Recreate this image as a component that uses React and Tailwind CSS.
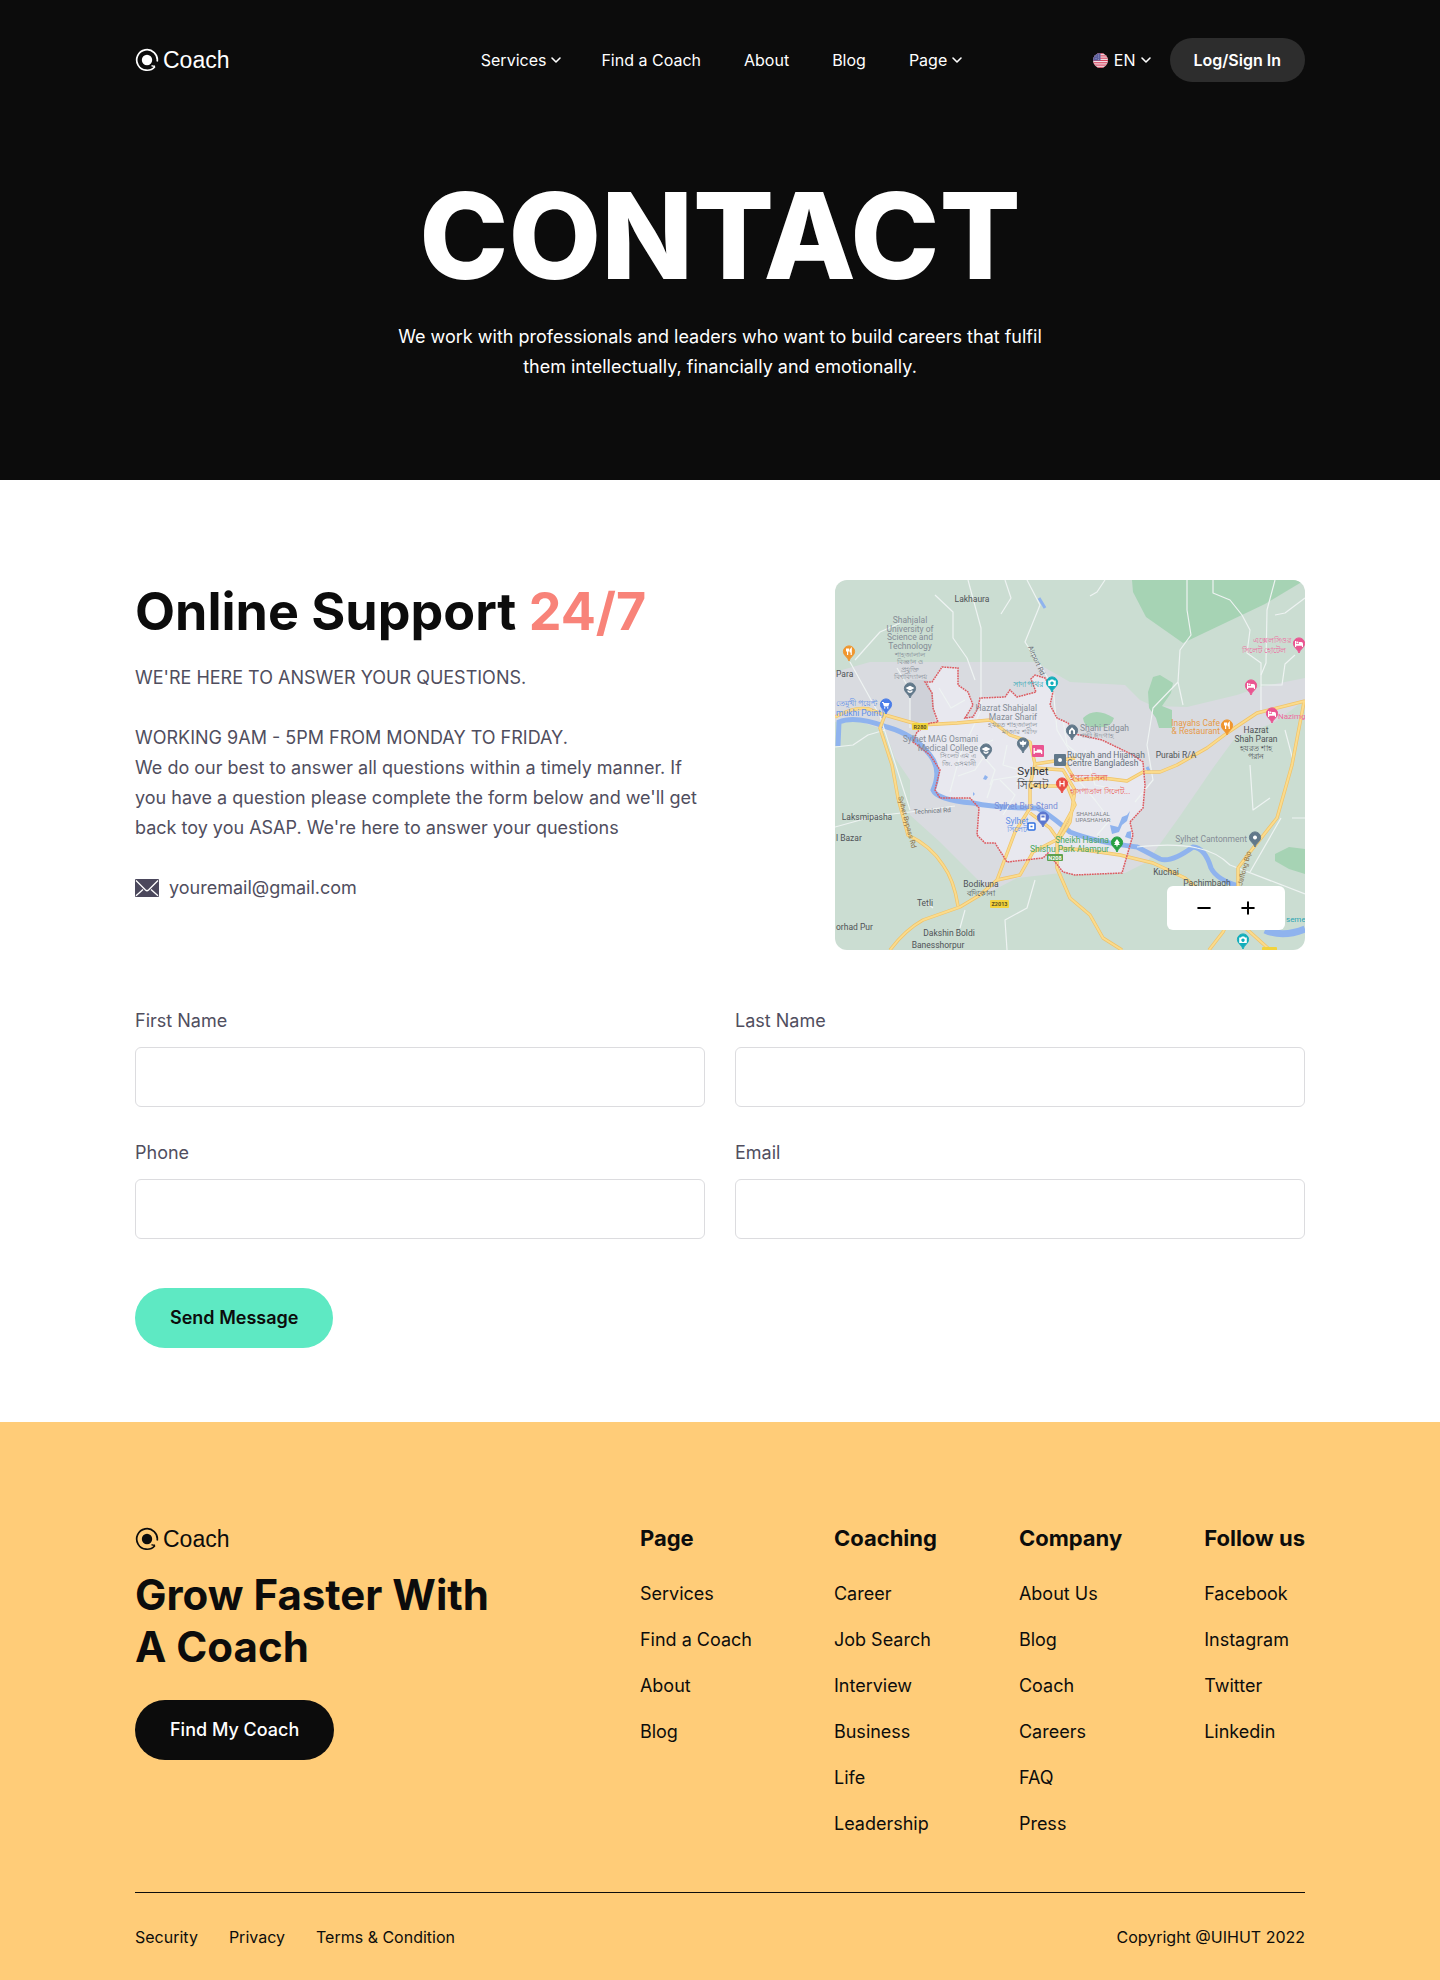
import { ChevronDown, Minus, Plus } from "lucide-react";

function Logo({ className = "" }) {
  return (
    <a href="#home" className={`flex h-7 items-center gap-1 ${className}`}>
      <svg viewBox="0 0 24 24" className="size-6" fill="none" aria-hidden="true">
        <path d="M22.200 13.500A10.300 10.300 0 1 0 19.800 18.700" stroke="currentColor" strokeWidth="1.700" />
        <circle cx="12" cy="12" r="5.200" fill="currentColor" />
        <path d="M16.500 17.600q1.800.8 3.600.6" stroke="currentColor" strokeWidth="1.500" />
      </svg>
      <span className="font-['Liberation_Sans',Arial,sans-serif] text-[23px] leading-7">Coach</span>
    </a>
  );
}

function Flag() {
  return (
    <svg viewBox="0 0 15 15" className="size-[15px]" aria-hidden="true">
      <clipPath id="flag-clip">
        <circle cx="7.5" cy="7.5" r="7.5" />
      </clipPath>
      <g clipPath="url(#flag-clip)">
        <rect width="15" height="15" fill="#f3e9ee" />
        {[0, 1, 2, 3, 4, 5, 6].map((i) => (
          <rect key={i} y={i * 2.3} width="15" height="1.15" fill="#d8435c" />
        ))}
        <rect width="7.5" height="7.6" fill="#5b5e9c" />
        <g fill="#c9cbe6">
          <circle cx="3" cy="3" r=".45" />
          <circle cx="5.5" cy="2" r=".45" />
          <circle cx="5.5" cy="4" r=".45" />
          <circle cx="3" cy="5.5" r=".45" />
          <circle cx="5.5" cy="6.2" r=".45" />
        </g>
      </g>
    </svg>
  );
}

const navItems = [
  { label: "Services", menu: true },
  { label: "Find a Coach" },
  { label: "About" },
  { label: "Blog" },
  { label: "Page", menu: true },
];

function Header() {
  return (
    <header className="bg-[#0c0c0c] pb-[98px] text-white">
      <div className="mx-auto grid max-w-[1170px] grid-cols-[1fr_auto_1fr] items-center pt-[38px]">
        <Logo />
        <nav className="flex items-center gap-[43px] text-base">
          {navItems.map(({ label, menu }) =>
            menu ? (
              <button key={label} type="button" className="-mr-1.5 flex items-center gap-0.5">
                {label}
                <ChevronDown className="size-4" strokeWidth={2.4} />
              </button>
            ) : (
              <a key={label} href="#home">
                {label}
              </a>
            )
          )}
        </nav>
        <div className="flex items-center justify-end gap-4">
          <button type="button" className="flex items-center text-base">
            <Flag />
            <span className="ml-1.5 mr-0.5">EN</span>
            <ChevronDown className="size-4" strokeWidth={2.4} />
          </button>
          <button type="button" className="h-11 rounded-full bg-[#2d2d2d] px-6 text-base font-semibold">
            Log/Sign In
          </button>
        </div>
      </div>
      <div className="mx-auto mt-[81px] max-w-[680px] text-center">
        <h1 className="text-[120px] font-extrabold leading-[146px]">CONTACT</h1>
        <p className="mt-[13px] text-lg leading-[30px]">
          We work with professionals and leaders who want to build careers that fulfil them intellectually,
          financially and emotionally.
        </p>
      </div>
    </header>
  );
}

/* ---- Map ---- */

const cityEdge =
  "M130 138L138 125L133 112L123 105L123 88L107 87L97 102L90 102L97 113L98 128L103 142L95 143L82 152L78 162L95 175L105 190L100 210L105 218L135 218L144 228L142 255L150 263L160 263L172 282L208 278L213 273L228 292L240 295L287 293L298 255L295 242L308 228L310 205L308 182L298 175L267 160L240 154L233 143L222 138L215 125L218 112L210 98L200 95L196 99L201 112L182 117L175 110L170 117L145 118L143 128L138 137Z";

const yellowRoads = [
  "M0 137Q20 126 34 129L50 135L85 145L122 143L155 140L175 155L195 162L200 184L195 205V228L180 252L162 300L145 315L125 327L88 340Q70 350 55 370",
  "M50 135L45 148L57 185L63 218L73 255Q96 266 108 285Q119 300 123 326",
  "M162 300L185 295L198 272L225 258L235 242L240 210L228 190L200 188",
  "M195 233L215 248L222 258V288L235 318L255 335L268 358L287 370",
  "M222 268L250 270L285 275L318 283L350 298L380 322L415 352L435 370",
  "M228 180L240 200L268 198L292 201L308 192L325 192L342 185L372 168L392 153L422 133L470 121",
  "M469 122L457 185L442 238L415 272L403 288V320L388 352L374 370",
  "M196 206H228M200 184L240 178M222 258L240 225L232 205",
];

const whiteRoads = [
  "M133 0L146 48V130L140 143L125 175L115 212",
  "M100 15L118 32V58L132 78L140 100",
  "M192 0L205 25L190 62L205 85L218 107L222 150L240 180",
  "M15 82L45 136L75 230M75 148V110L62 88",
  "M0 247L40 236L75 232L120 226",
  "M378 0V13L395 20L407 35L415 50L412 73L426 83V130",
  "M352 0L352 30L356 55L345 70L343 102L348 125M343 102L318 128L312 165L318 200L300 222",
  "M440 0L432 30L431 83L426 95M470 18L450 33L440 35M426 105H447L450 84L460 75",
  "M450 150L458 180M415 185L418 230L435 218M457 238H470",
  "M235 190L260 220L275 240L262 255M302 267Q340 263 362 268Q382 272 395 285L470 314",
  "M446 238L415 292M90 322L98 328M130 330L125 348M200 300L192 328L170 340L172 370",
  "M104 108L116 128L130 120M108 165L124 162L140 168L158 160M147 175L160 190L155 205M165 200L180 215L168 235",
  "M150 175L140 190L123 196M240 180L262 184L285 180M250 170L260 205L285 210M20 80L36 62L45 52L65 43",
  "M0 167L18 165L33 155L50 150M170 0L176 18L166 34M270 0L262 12L255 16",
  "M152 218L158 200L190 195M172 165L168 185L185 190L182 205M228 140L232 165L250 180",
];

const pins = [
  { x: 14, y: 81, color: "#f0962e", kind: "fork" },
  { x: 51, y: 134, color: "#4a7de8", kind: "cart" },
  { x: 75, y: 118, color: "#61788a", kind: "cap" },
  { x: 217, y: 112, color: "#12aebb", kind: "camera" },
  { x: 151, y: 179, color: "#61788a", kind: "cap" },
  { x: 188, y: 173, color: "#61788a", kind: "flower" },
  { x: 237, y: 160, color: "#61788a", kind: "arch" },
  { x: 464, y: 73, color: "#ea5591", kind: "bed" },
  { x: 416, y: 115, color: "#ea5591", kind: "bed" },
  { x: 437, y: 143, color: "#ea5591", kind: "bed" },
  { x: 392, y: 155, color: "#f0962e", kind: "fork" },
  { x: 227, y: 213, color: "#ea4b43", kind: "hospital" },
  { x: 208, y: 247, color: "#5b76cf", kind: "bus" },
  { x: 282, y: 272, color: "#28a044", kind: "tree" },
  { x: 420, y: 267, color: "#61788a", kind: "dot" },
  { x: 408, y: 369, color: "#12aebb", kind: "camera" },
];

/* Glyphs are centred on the head of the pin, 9.5 units above its tip. */
const pinGlyphs = {
  fork: { line: "M-2.400-12.500v2.500h2v-2.500M-1.400-12.500v6.500M2.200-6v-6.500q-1.600 1.500-1 3.500h1" },
  cart: { fill: "M-4-12h1.600l.5 1h5.400l-1.200 3.600h-4.300L-3.200-11H-4ZM-2-6.800h1.300v1.300H-2ZM1-6.800h1.300v1.300H1Z" },
  cap: { fill: "M-4.500-9.900L0-12.300L4.500-9.900L0-7.500ZM-2.400-7.900L0-6.600L2.400-7.900V-6L0-5L-2.400-6Z" },
  camera: {
    fill: "M-3.800-11.500h1.800l.8-1h2.400l.8 1h1.800v5.500h-7.600ZM0-10.500a1.700 1.700 0 1 0 .01 0Z",
  },
  flower: { fill: "M0-13l1.300 2L3.500-11.500L2.800-8.500L.6-8V-6H-.6V-8L-2.800-8.500L-3.500-11.500L-1.300-11Z" },
  arch: { fill: "M-3-6v-3.500L0-12.800L3-9.500V-6H1.200V-8.500a1.200 1.200 0 0 0-2.400 0V-6Z" },
  bed: { fill: "M-4-12h1.200v3h2.600v-2h2.500q1.700 0 1.700 1.800V-6H2.900v-1.300h-5.700V-6H-4ZM-1.600-11.600a.9.9 0 1 0 .01 0Z" },
  hospital: { line: "M-2-12.200v5.600M2-12.200v5.600M-2-9.400h4" },
  bus: { fill: "M-2.600-12.500h5.200v6h-5.200ZM-1.600-11.500v2h3.200v-2Z" },
  tree: { fill: "M0-13L2.800-9H1.600L3-7H.6v1.500H-.6V-7H-3L-1.600-9H-2.800Z" },
  dot: { fill: "M0-11.500a2 2 0 1 0 .01 0Z" },
};

function Pin({ x, y, color, kind }) {
  const { fill, line } = pinGlyphs[kind];
  return (
    <g transform={`translate(${x} ${y})`}>
      <path
        d="M0 0C-1-4-5.600-5.300-5.600-9.500A5.600 5.600 0 0 1 5.600-9.500C5.600-5.300 1-4 0 0Z"
        fill={color}
        stroke={color}
        strokeWidth="1"
      />
      {fill ? <path d={fill} fill="#fff" fillRule="evenodd" /> : <path d={line} fill="none" stroke="#fff" strokeWidth="1.200" />}
    </g>
  );
}

const labels = [
  { x: 137, y: 22, text: "Lakhaura", color: "#505357" },
  { x: 75, y: 43, text: "Shahjalal" },
  { x: 75, y: 51.5, text: "University of" },
  { x: 75, y: 60, text: "Science and" },
  { x: 75, y: 68.5, text: "Technology" },
  { x: 75, y: 77, text: "শাহজালাল", size: 7 },
  { x: 75, y: 84, text: "বিজ্ঞান ও", size: 7 },
  { x: 75, y: 92, text: "প্রযুক্তি", size: 7 },
  { x: 75, y: 99, text: "বিশ্ববিদ্যালয়", size: 7 },
  { x: 1, y: 97, text: "Para", color: "#505357", anchor: "start" },
  { x: 1, y: 126, text: "তেমুখী পয়েন্ট", color: "#5f8fe8", anchor: "start", size: 8 },
  { x: 1, y: 136, text: "mukhi Point)", color: "#5f8fe8", anchor: "start" },
  { x: 193, y: 107, text: "সাদা পাথর", color: "#2ba5b3", size: 8 },
  { x: 202, y: 131, text: "Hazrat Shahjalal", anchor: "end" },
  { x: 202, y: 139.5, text: "Mazar Sharif", anchor: "end" },
  { x: 202, y: 147, text: "হযরত শাহজালাল", anchor: "end", size: 7 },
  { x: 202, y: 154, text: "মাজার শরীফ", anchor: "end", size: 7 },
  { x: 143, y: 162, text: "Sylhet MAG Osmani", anchor: "end" },
  { x: 143, y: 170.5, text: "Medical College", anchor: "end" },
  { x: 141, y: 178, text: "সিলেট এম এ", anchor: "end", size: 7 },
  { x: 141, y: 186, text: "জি. ওসমানী", anchor: "end", size: 7 },
  { x: 245, y: 151, text: "Shahi Eidgah", anchor: "start" },
  { x: 245, y: 158, text: "শাহী ঈদগাহ", anchor: "start", size: 7 },
  { x: 232, y: 178, text: "Ruqyah and Hijamah", anchor: "start", color: "#66707a" },
  { x: 232, y: 186, text: "Centre Bangladesh", anchor: "start", color: "#66707a" },
  { x: 341, y: 178, text: "Purabi R/A", color: "#505357" },
  { x: 385, y: 146, text: "Inayahs Cafe", color: "#e79a48", anchor: "end" },
  { x: 385, y: 154, text: "& Restaurant", color: "#e79a48", anchor: "end" },
  { x: 421, y: 153, text: "Hazrat", color: "#505357" },
  { x: 421, y: 162, text: "Shah Paran", color: "#505357" },
  { x: 421, y: 171, text: "হযরত শাহ", color: "#505357", size: 8 },
  { x: 421, y: 179, text: "পরান", color: "#505357", size: 8 },
  { x: 456, y: 63, text: "এক্সেলসিওর", color: "#ee6aa0", anchor: "end", size: 8 },
  { x: 451, y: 73, text: "সিলেট হোটেল", color: "#ee6aa0", anchor: "end", size: 8 },
  { x: 443, y: 139, text: "Nazimg", color: "#ee6aa0", anchor: "start", size: 8 },
  { x: 198, y: 195, text: "Sylhet", color: "#33363a", size: 11.5 },
  { x: 198, y: 209, text: "সিলেট", color: "#33363a", size: 12 },
  { x: 235, y: 201, text: "ইবনে সিনা", color: "#ea5b55", anchor: "start" },
  { x: 235, y: 214, text: "হাসপাতাল সিলেট...", color: "#ea5b55", anchor: "start", size: 8 },
  { x: 191, y: 229, text: "Sylhet Bus Stand", color: "#7c8fd6" },
  { x: 182, y: 244, text: "Sylhet", color: "#5f8fe8" },
  { x: 182, y: 252, text: "সিলেট", color: "#5f8fe8", size: 8 },
  { x: 258, y: 236, text: "SHAHJALAL", size: 6, color: "#7b7f86" },
  { x: 258, y: 242, text: "UPASHAHAR", size: 6, color: "#7b7f86" },
  { x: 274, y: 263, text: "Sheikh Hasina", color: "#4aa763", anchor: "end" },
  { x: 274, y: 271.5, text: "Shishu Park Alampur", color: "#4aa763", anchor: "end" },
  { x: 412, y: 262, text: "Sylhet Cantonment", anchor: "end" },
  { x: 331, y: 295, text: "Kuchai", color: "#505357" },
  { x: 372, y: 306, text: "Pachimbagh", color: "#505357" },
  { x: 32, y: 240, text: "Laksmipasha", color: "#505357" },
  { x: 1, y: 261, text: "l Bazar", color: "#505357", anchor: "start" },
  { x: 146, y: 307, text: "Bodikuna", color: "#505357" },
  { x: 146, y: 316, text: "বদিকোনা", color: "#505357", size: 8 },
  { x: 90, y: 326, text: "Tetli", color: "#505357" },
  { x: 1, y: 350, text: "orhad Pur", color: "#505357", anchor: "start" },
  { x: 114, y: 356, text: "Dakshin Boldi", color: "#505357" },
  { x: 103, y: 368, text: "Banesshorpur", color: "#505357" },
  { x: 451, y: 342, text: "seme", color: "#2ba5b3", anchor: "start", size: 8 },
];

function MapDrawing() {
  return (
    <svg viewBox="0 0 470 370" className="block w-full rounded-xl bg-[#cbddd2]" role="img" aria-label="Map of Sylhet">
      <path
        d="M0 92L35 82H200L235 102L290 105L305 120L318 126L352 127L402 115L425 107L470 98V120L440 142L400 158L378 188L345 236L312 282L290 293L235 292L182 298L155 312L128 285L105 262L75 235V200L60 178L50 150L20 140L0 142Z"
        fill="#d9dbe0"
      />
      <path d={cityEdge} fill="#e8e8ef" />
      <path d="M75 100h17l6 15l2 26l-25 2Z" fill="#cfd1d8" />
      <path d="M297 0H470L430 24L348 63L311 37L298 12Z" fill="#a6d3b4" />
      <path d="M318 97L325 95L338 103L336 113L327 126L337 130V148H324L321 138L314 128L313 112Z" fill="#a6d3b4" />
      <path d="M248 138q12-12 31 0q-3 11-17 9q-13 2-14-9Z" fill="#a6d3b4" />
      <path d="M440 274l14-7l16 2v25l-16-5l-14-8Z" fill="#a6d3b4" />

      <g fill="none" stroke="#8fb3ee">
        <path
          d="M3 166L4 142Q20 135 52 147Q80 155 95 175Q107 190 98 210Q102 220 138 223Q160 228 202 228Q213 233 235 252Q260 262 302 267L325 279Q336 283 358 267Q370 268 376 288Q382 300 404 306"
          strokeWidth="5"
        />
        <path d="M430 350Q448 358 470 349" strokeWidth="7" />
        <path d="M204 18l6 10M312 187l2 4" strokeWidth="3" />
      </g>
      <path
        d="M275 245l8 2l4-10l5-2l3-4l-3 10l-5 4l-3 7l-7 2ZM292 252l4-1v8l-6-2ZM150 195l3 2l-2 3l-3-1ZM138 212l2 2l-2 2Z"
        fill="#8fb3ee"
      />

      <g fill="none" stroke="#eef3f2" strokeWidth="1.200" strokeLinejoin="round">
        {whiteRoads.map((d) => (
          <path key={d} d={d} />
        ))}
      </g>
      <g fill="none" strokeLinejoin="round">
        {yellowRoads.map((d) => (
          <path key={d} d={d} stroke="#efc36a" strokeWidth="3.400" />
        ))}
        {yellowRoads.map((d) => (
          <path key={d} d={d} stroke="#fbdb8c" strokeWidth="2" />
        ))}
      </g>
      <path d={cityEdge} fill="none" stroke="#dd5a60" strokeWidth="1.500" strokeDasharray="1.800 .8" />

      <g fontFamily="Roboto, 'Noto Sans', sans-serif">
        {labels.map(({ x, y, text, color = "#858c96", anchor = "middle", size = 8.5 }) => (
          <text key={`${text}${y}`} x={x} y={y} fill={color} textAnchor={anchor} fontSize={size}>
            {text}
          </text>
        ))}
        <text transform="translate(193 67) rotate(66)" fontSize="7" fill="#6b7078">
          Airport Rd
        </text>
        <text transform="translate(63 217) rotate(75)" fontSize="7" fill="#8a6f45">
          Sylhet Bypass Rd
        </text>
        <text transform="translate(79 234) rotate(-3)" fontSize="6.500" fill="#6b7078">
          Technical Rd
        </text>
        <text transform="translate(407 306) rotate(-75)" fontSize="7" fill="#8a6f45">
          Jaflong Bip
        </text>
        <g textAnchor="middle" fontSize="5.500" fontWeight="700">
          <rect x="77" y="143" width="16" height="7" rx="1" fill="#f2d33d" />
          <text x="85" y="148.500" fill="#5f5320">R280</text>
          <rect x="155" y="320" width="19" height="8" rx="1" fill="#f2d33d" />
          <text x="164.500" y="326" fill="#5f5320">Z2013</text>
          <rect x="212" y="274" width="16" height="7" rx="1" fill="#5da14f" />
          <text x="220" y="279.500" fill="#fff">N208</text>
          <rect x="427" y="367" width="15" height="7" rx="1" fill="#f2d33d" />
        </g>
      </g>

      <rect x="197" y="165" width="12" height="12" rx="1" fill="#ea5591" />
      <path d="M198.500 168h1.300v3h2v-1.500h3.500q2 0 2 1.800v2.700h-1.300v-1.200h-6.200v1.200h-1.300Z" fill="#fff" />
      <rect x="219" y="174" width="12" height="12" rx="1" fill="#61788a" />
      <circle cx="225" cy="180" r="2" fill="#fff" />
      <rect x="193" y="243" width="7" height="7" rx="1" fill="#fff" stroke="#2f6fe0" strokeWidth="1.500" />
      <path d="M195.500 246.500h2" stroke="#2f6fe0" strokeWidth="1.500" />
      {pins.map((pin) => (
        <Pin key={`${pin.x}-${pin.y}`} {...pin} />
      ))}
    </svg>
  );
}

function MapCard() {
  return (
    <div className="relative w-[470px] shrink-0">
      <MapDrawing />
      <div className="absolute right-5 bottom-5 flex h-11 items-center gap-5 rounded-md bg-white px-[25px] text-black">
        <button type="button" aria-label="Zoom out" className="flex size-6 items-center justify-center">
          <Minus className="size-5" strokeWidth={2.4} />
        </button>
        <button type="button" aria-label="Zoom in" className="flex size-6 items-center justify-center">
          <Plus className="size-5" strokeWidth={2.4} />
        </button>
      </div>
    </div>
  );
}

function Support() {
  return (
    <section className="flex items-start justify-between">
      <div className="max-w-[570px] text-lg leading-[30px] text-[#504e5e]">
        <h2 className="text-[52px] font-bold leading-[63px] text-[#0c0c0c]">
          Online Support <span className="text-[#f88379]">24/7</span>
        </h2>
        <p className="mt-5">WE'RE HERE TO ANSWER YOUR QUESTIONS.</p>
        <p className="mt-[30px]">WORKING 9AM - 5PM FROM MONDAY TO FRIDAY.</p>
        <p>
          We do our best to answer all questions within a timely manner. If you have a question please complete
          the form below and we'll get back toy you ASAP. We're here to answer your questions
        </p>
        <a href="mailto:youremail@gmail.com" className="mt-[30px] flex items-center gap-2.5">
          <svg viewBox="0 0 24 18" className="h-[18px] w-6" aria-hidden="true">
            <rect width="24" height="18" rx="1" fill="#4b485c" />
            <path
              d="M1 1.500L10.500 11q1.500 1.400 3 0L23 1.500M1 16.800L8 10.500M23 16.800L16 10.500"
              fill="none"
              stroke="#fff"
              strokeWidth="1.300"
            />
          </svg>
          youremail@gmail.com
        </a>
      </div>
      <MapCard />
    </section>
  );
}

const fields = [
  { id: "first-name", label: "First Name", type: "text" },
  { id: "last-name", label: "Last Name", type: "text" },
  { id: "phone", label: "Phone", type: "tel" },
  { id: "email", label: "Email", type: "email" },
];

function ContactForm() {
  return (
    <form className="mt-14">
      <div className="grid grid-cols-2 gap-x-[30px] gap-y-[31px]">
        {fields.map(({ id, label, type }) => (
          <div key={id} className="flex flex-col gap-[11px] text-lg leading-[30px] text-[#504e5e]">
            <label htmlFor={id}>{label}</label>
            <input id={id} name={id} type={type} className="h-[60px] w-full rounded-md border border-[#dcdcdf] px-5" />
          </div>
        ))}
      </div>
      <button type="submit" className="mt-[49px] h-[60px] rounded-full bg-[#5ee9c3] px-[35px] text-lg font-semibold text-[#0c0c0c]">
        Send Message
      </button>
    </form>
  );
}

const footerColumns = [
  { title: "Page", links: ["Services", "Find a Coach", "About", "Blog"] },
  { title: "Coaching", links: ["Career", "Job Search", "Interview", "Business", "Life", "Leadership"] },
  { title: "Company", links: ["About Us", "Blog", "Coach", "Careers", "FAQ", "Press"] },
  { title: "Follow us", links: ["Facebook", "Instagram", "Twitter", "Linkedin"] },
];

function Footer() {
  return (
    <footer className="bg-[#ffcc78] text-[#0c0c0c]">
      <div className="mx-auto max-w-[1170px] pt-[101px] pb-8">
        <div className="flex justify-between">
          <div>
            <Logo className="mt-0.5" />
            <h2 className="mt-4 text-[42px] font-bold leading-[52px]">
              Grow Faster With
              <br />A Coach
            </h2>
            <button type="button" className="mt-[27px] h-[60px] rounded-full bg-[#0c0c0c] px-[35px] text-lg font-medium text-white">
              Find My Coach
            </button>
          </div>
          <div className="flex gap-[82px]">
            {footerColumns.map(({ title, links }) => (
              <div key={title}>
                <h3 className="text-[22px] font-bold leading-[30px]">{title}</h3>
                <ul className="mt-[26px] flex flex-col gap-4 text-lg leading-[30px]">
                  {links.map((link) => (
                    <li key={link}>
                      <a href="#home">{link}</a>
                    </li>
                  ))}
                </ul>
              </div>
            ))}
          </div>
        </div>
        <div className="mt-[53px] flex justify-between border-t border-[#0c0c0c] pt-8 text-base">
          <div className="flex gap-[31px]">
            <a href="#security">Security</a>
            <a href="#privacy">Privacy</a>
            <a href="#terms">Terms &amp; Condition</a>
          </div>
          <p>Copyright @UIHUT 2022</p>
        </div>
      </div>
    </footer>
  );
}

export default function App() {
  return (
    <div className="bg-white font-['Inter',sans-serif]">
      <Header />
      <main className="mx-auto max-w-[1170px] pt-[100px] pb-[74px]">
        <Support />
        <ContactForm />
      </main>
      <Footer />
    </div>
  );
}
